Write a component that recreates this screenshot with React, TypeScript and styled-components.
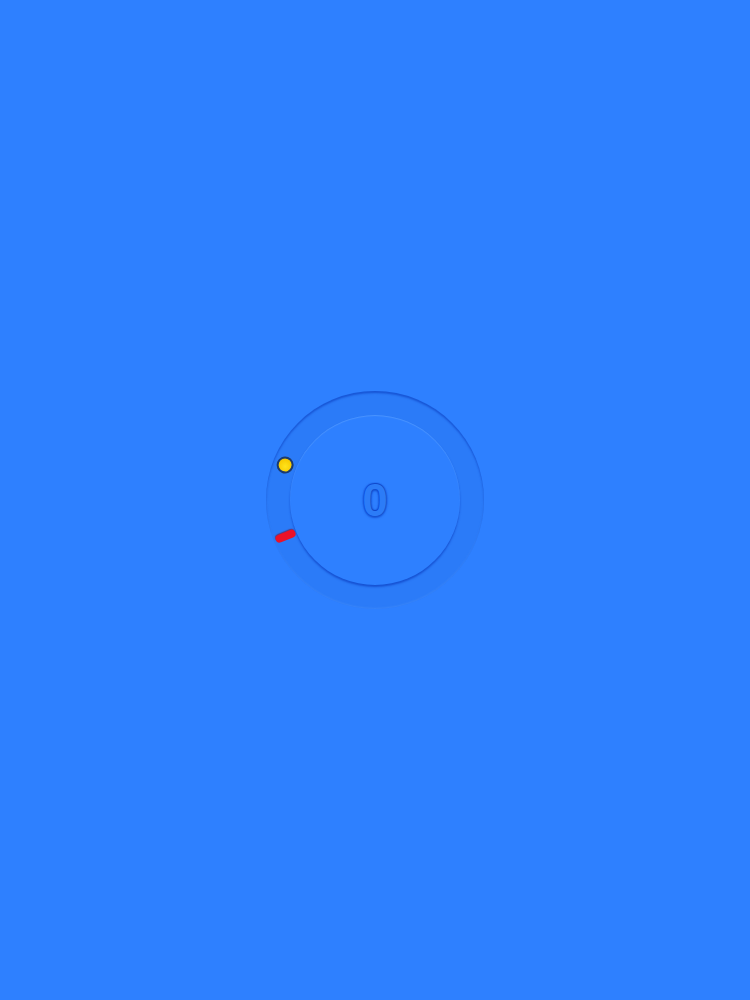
import React from 'react';
import styled, { createGlobalStyle } from 'styled-components';

const GlobalStyle = createGlobalStyle`
  html, body {
    margin: 0;
    padding: 0;
    background: #2e80ff;
  }
  #root {
    min-height: 100vh;
  }
`;

const Stage = styled.div`
  height: 1000px;
  display: flex;
  align-items: center;
  justify-content: center;
  background: #2e80ff;
`;

// outer track the ball runs around
const Track = styled.div`
  position: relative;
  width: 218px;
  height: 218px;
  border-radius: 50%;
  background: #2b7bf8;
  box-shadow: inset 0 2px 2px rgba(10, 60, 190, 0.6),
    inset 0 -1px 2px rgba(120, 180, 255, 0.2);
  display: flex;
  align-items: center;
  justify-content: center;
`;

const Disc = styled.div`
  width: 170px;
  height: 170px;
  border-radius: 50%;
  background: #2e80ff;
  box-shadow: 0 2px 2px rgba(10, 60, 190, 0.65),
    inset 0 1px 1px rgba(130, 185, 255, 0.35);
  display: flex;
  align-items: center;
  justify-content: center;
`;

const Score = styled.span`
  font-family: 'Liberation Sans', sans-serif;
  font-size: 46px;
  font-weight: bold;
  color: #2c7cf7;
  text-shadow: 0 -1px 1px rgba(10, 60, 190, 0.8), 0 2px 2px rgba(10, 60, 190, 0.55),
    1px 0 2px rgba(10, 60, 190, 0.6), -1px 0 2px rgba(10, 60, 190, 0.6);
  line-height: 1;
`;

// items placed on the track by angle
const Orbit = styled.div<{ $angle: number }>`
  position: absolute;
  left: 50%;
  top: 50%;
  width: 0;
  height: 0;
  transform: rotate(${(p) => p.$angle}deg);
`;

const Ball = styled.div`
  position: absolute;
  left: 88px;
  top: -8.5px;
  width: 17px;
  height: 17px;
  box-sizing: border-box;
  border-radius: 50%;
  background: radial-gradient(circle at 45% 40%, #ffe31c 0%, #f7c900 70%, #dba900 100%);
  border: 2px solid #1c3b6e;
`;

const Marker = styled.div`
  position: absolute;
  left: 86px;
  top: -4px;
  width: 21px;
  height: 8px;
  border-radius: 4px;
  background: #ec1128;
  box-shadow: 0 1px 1px rgba(120, 0, 20, 0.5);
`;

export default function App() {
  return (
    <>
      <GlobalStyle />
      <Stage>
        <Track>
          <Disc>
            <Score>0</Score>
          </Disc>
          <Orbit $angle={201}>
            <Ball />
          </Orbit>
          <Orbit $angle={158}>
            <Marker />
          </Orbit>
        </Track>
      </Stage>
    </>
  );
}
